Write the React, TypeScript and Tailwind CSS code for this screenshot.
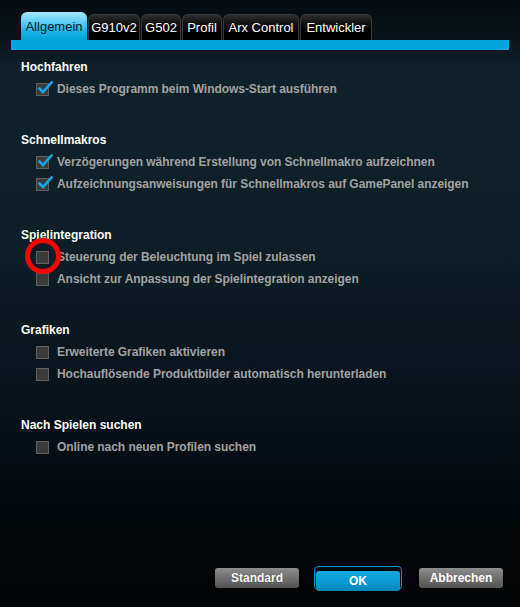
import React from "react";

const font = { fontFamily: '"Liberation Sans", Arial, sans-serif' };

function Tab({ label, width, active }: { label: string; width: number; active?: boolean }) {
  if (active) {
    return (
      <div
        className="h-[28px] pt-[1px] rounded-t-[6px] flex items-center justify-center text-[13px] text-[#06161d] bg-[linear-gradient(to_bottom,#a6e8fd_0%,#5fcdf4_35%,#19b0e6_70%,#04a3dc_100%)]"
        style={{ width }}
      >
        {label}
      </div>
    );
  }
  return (
    <div
      className="h-[26px] rounded-t-[6px] border border-b-0 border-[#3a3a3a] flex items-center justify-center text-[13px] text-white bg-[linear-gradient(to_bottom,#2e2e2e_0%,#141414_30%,#000000_60%,#000000_100%)]"
      style={{ width }}
    >
      {label}
    </div>
  );
}

function Check({ checked }: { checked?: boolean }) {
  return (
    <div className="relative w-[13px] h-[13px] border border-[#606060] bg-[#3b3b3b] shrink-0">
      {checked && (
        <svg
          className="absolute left-[0px] top-[-4px]"
          width="16"
          height="16"
          viewBox="0 0 16 16"
        >
          <path
            d="M2.5 8.5 L6 12 L14.5 2.5"
            fill="none"
            stroke="#16a6e6"
            strokeWidth="2.6"
            strokeLinecap="square"
          />
        </svg>
      )}
    </div>
  );
}

function Item({ label, checked }: { label: string; checked?: boolean }) {
  return (
    <div className="h-[22px] flex items-center pl-[15px] gap-[8px]">
      <Check checked={checked} />
      <span className="text-[12px] font-bold text-[#a2a2a2] leading-[22px] tracking-[-0.05px]">{label}</span>
    </div>
  );
}

function Section({
  title,
  items,
  first,
}: {
  title: string;
  items: { label: string; checked?: boolean }[];
  first?: boolean;
}) {
  return (
    <div className={first ? "mt-[6px]" : "mt-[29px]"}>
      <div className="h-[22px] leading-[22px] text-[12px] font-bold text-white">{title}</div>
      {items.map((it) => (
        <Item key={it.label} label={it.label} checked={it.checked} />
      ))}
    </div>
  );
}

export default function App() {
  return (
    <div
      className="relative w-[520px] h-[607px] overflow-hidden flex flex-col bg-[linear-gradient(to_bottom,#050c10_0px,#08141a_40px,#0f222b_70px,#0d1e26_250px,#07111a_420px,#03080b_520px,#020405_607px)]"
      style={font}
    >
      <div className="flex items-end gap-[1px] pl-[21px] pt-[12px]">
        <Tab label="Allgemein" width={66} active />
        <Tab label="G910v2" width={52} />
        <Tab label="G502" width={40} />
        <Tab label="Profil" width={40} />
        <Tab label="Arx Control" width={76} />
        <Tab label="Entwickler" width={72} />
      </div>
      <div className="mx-[11px] h-[10px] bg-[#00a5dd]" />

      <div className="flex flex-col pl-[21px]">
        <Section
          first
          title="Hochfahren"
          items={[{ label: "Dieses Programm beim Windows-Start ausführen", checked: true }]}
        />
        <Section
          title="Schnellmakros"
          items={[
            { label: "Verzögerungen während Erstellung von Schnellmakro aufzeichnen", checked: true },
            { label: "Aufzeichnungsanweisungen für Schnellmakros auf GamePanel anzeigen", checked: true },
          ]}
        />
        <Section
          title="Spielintegration"
          items={[
            { label: "Steuerung der Beleuchtung im Spiel zulassen" },
            { label: "Ansicht zur Anpassung der Spielintegration anzeigen" },
          ]}
        />
        <Section
          title="Grafiken"
          items={[
            { label: "Erweiterte Grafiken aktivieren" },
            { label: "Hochauflösende Produktbilder automatisch herunterladen" },
          ]}
        />
        <Section
          title="Nach Spielen suchen"
          items={[{ label: "Online nach neuen Profilen suchen" }]}
        />
      </div>

      <div className="mt-auto flex items-center justify-end pr-[17px] pb-[17px] h-[41px]">
        <button className="w-[84px] h-[20px] rounded-[3px] text-[12px] font-bold text-white bg-[linear-gradient(to_bottom,#8e8e8e_0%,#6e6e6e_50%,#545454_100%)] [text-shadow:0_0_1px_rgba(0,0,0,0.5)]">
          Standard
        </button>
        <div className="ml-[15px] w-[88px] h-[24px] rounded-[4px] border border-[#0a8fc4] p-[1px] bg-[#03090c]">
          <button className="w-full h-full rounded-[3px] text-[12px] font-bold text-white bg-[linear-gradient(to_bottom,#12a8de_0%,#0a9bd2_50%,#0786bb_100%)]">
            OK
          </button>
        </div>
        <button className="ml-[17px] w-[84px] h-[20px] rounded-[3px] text-[12px] font-bold text-white bg-[linear-gradient(to_bottom,#8e8e8e_0%,#6e6e6e_50%,#545454_100%)]">
          Abbrechen
        </button>
      </div>

      <div className="absolute left-[25px] top-[238px] w-[36px] h-[36px] rounded-full border-[5px] border-[#ff0000]" />
    </div>
  );
}
